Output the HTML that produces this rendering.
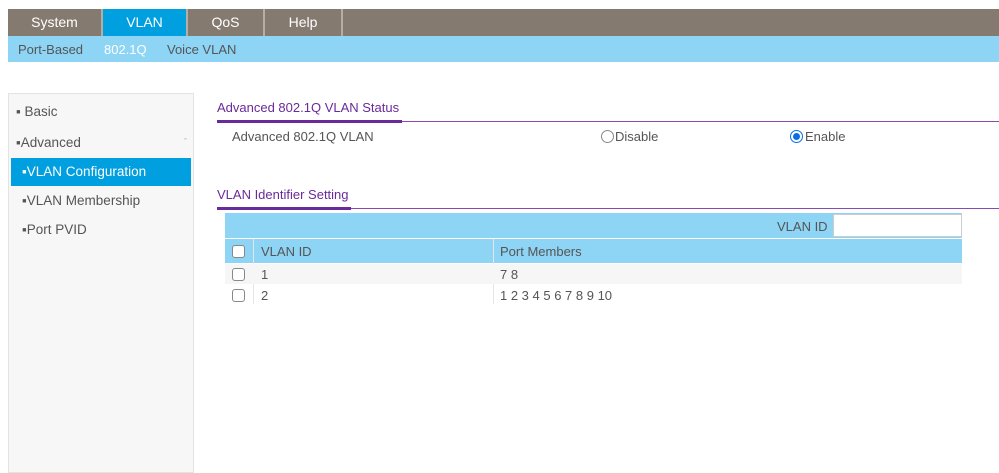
<!DOCTYPE html>
<html><head><style>
*{margin:0;padding:0;box-sizing:border-box}
body{width:999px;height:465px;background:#fff;font-family:"Liberation Sans",sans-serif;font-size:13px;color:#555;position:relative;overflow:hidden}
.a{position:absolute;white-space:nowrap}
.tab{position:absolute;top:9px;height:27px;color:#fff;font-size:14px;text-align:center;line-height:27px;background:#857a70}
.cb{position:absolute;width:13px;height:13px;border:1px solid #888;border-radius:3px;background:#fff}
.s{font-size:13.5px}
</style></head><body>
<div class="a" style="left:8px;top:9px;width:991px;height:27px;background:#857a70"></div>
<div class="tab" style="left:8px;width:93px">System</div>
<div class="tab" style="left:103px;width:83px;background:#009fdf">VLAN</div>
<div class="tab" style="left:188px;width:75px">QoS</div>
<div class="tab" style="left:265px;width:76px">Help</div>
<div class="a" style="left:101px;top:9px;width:2px;height:27px;background:#b5aea7"></div>
<div class="a" style="left:186px;top:9px;width:2px;height:27px;background:#b5aea7"></div>
<div class="a" style="left:263px;top:9px;width:2px;height:27px;background:#b5aea7"></div>
<div class="a" style="left:341px;top:9px;width:2px;height:27px;background:#b5aea7"></div>
<div class="a" style="left:8px;top:36px;width:991px;height:26px;background:#8dd4f5"></div>
<div class="a" style="left:18px;top:42px;font-size:13px;color:#555">Port-Based</div>
<div class="a" style="left:104px;top:42px;font-size:13px;color:#fff">802.1Q</div>
<div class="a" style="left:167px;top:42px;font-size:13px;color:#555">Voice VLAN</div>

<div class="a" style="left:8px;top:93px;width:186px;height:380px;background:#f7f7f7;border:1px solid #e3e3e3"></div>
<div class="a s" style="left:16px;top:104px">▪ Basic</div>
<div class="a s" style="left:16px;top:135px">▪Advanced</div>
<div class="a" style="left:184px;top:137px;font-size:9px;color:#aaa">ˆ</div>
<div class="a" style="left:11px;top:158px;width:180px;height:28px;background:#009fdf"></div>
<div class="a s" style="left:22px;top:164px;color:#fff">▪VLAN Configuration</div>
<div class="a s" style="left:22px;top:193px">▪VLAN Membership</div>
<div class="a s" style="left:22px;top:222px">▪Port PVID</div>

<div class="a" style="left:217px;top:100px;font-size:13px;color:#6a2a9a">Advanced 802.1Q VLAN Status</div>
<div class="a" style="left:217px;top:121px;width:782px;height:1px;background:#8a4bb0"></div>
<div class="a" style="left:217px;top:120px;width:185px;height:3px;background:#6a2a9a"></div>
<div class="a" style="left:232px;top:129px;font-size:13px">Advanced 802.1Q VLAN</div>
<div class="a" style="left:601px;top:130px;width:13px;height:13px;border:1px solid #888;border-radius:50%"></div>
<div class="a" style="left:615px;top:129px;font-size:13px">Disable</div>
<div class="a" style="left:790px;top:130px;width:13px;height:13px;border:1px solid #0a6ee6;border-radius:50%;background:#fff"><div style="margin:2px;width:7px;height:7px;border-radius:50%;background:#0a6ee6"></div></div>
<div class="a" style="left:805px;top:129px;font-size:13px">Enable</div>

<div class="a" style="left:217px;top:187px;font-size:13px;color:#6a2a9a">VLAN Identifier Setting</div>
<div class="a" style="left:217px;top:208px;width:782px;height:1px;background:#8a4bb0"></div>
<div class="a" style="left:217px;top:207px;width:134px;height:3px;background:#6a2a9a"></div>

<div class="a" style="left:225px;top:213px;width:737px;height:25px;background:#8dd4f5"></div>
<div class="a" style="left:777px;top:219px;font-size:13px">VLAN ID</div>
<div class="a" style="left:833px;top:214px;width:129px;height:23px;background:#fff;border:1px solid #ccc"></div>
<div class="a" style="left:225px;top:239px;width:737px;height:24px;background:#8dd4f5"></div>
<div class="a" style="left:253px;top:239px;width:1px;height:65px;background:#e6e6e6"></div>
<div class="a" style="left:493px;top:239px;width:1px;height:65px;background:#e6e6e6"></div>
<div class="a" style="left:225px;top:264px;width:737px;height:20px;background:#f6f6f6"></div>
<div class="cb" style="left:232px;top:245px"></div>
<div class="cb" style="left:232px;top:268px"></div>
<div class="cb" style="left:232px;top:289px"></div>
<div class="a" style="left:261px;top:244px;font-size:13px">VLAN ID</div>
<div class="a" style="left:500px;top:244px;font-size:13px">Port Members</div>
<div class="a" style="left:261px;top:267px;font-size:13px">1</div>
<div class="a" style="left:500px;top:267px;font-size:13px">7 8</div>
<div class="a" style="left:261px;top:288px;font-size:13px">2</div>
<div class="a" style="left:500px;top:288px;font-size:13px">1 2 3 4 5 6 7 8 9 10</div>
</body></html>
